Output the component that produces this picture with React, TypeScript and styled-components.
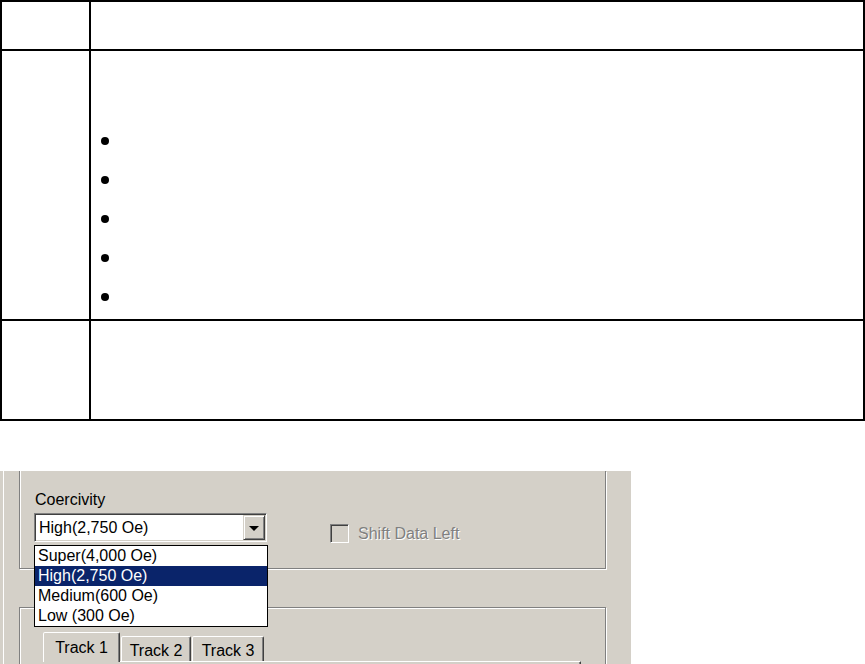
import * as React from 'react';
import styled, { createGlobalStyle } from 'styled-components';

const GlobalStyle = createGlobalStyle`
  html, body {
    margin: 0;
    padding: 0;
    background: #fff;
  }
  body {
    font-family: "Liberation Sans", Arial, sans-serif;
  }
`;

const options = ['Super(4,000 Oe)', 'High(2,750 Oe)', 'Medium(600 Oe)', 'Low (300 Oe)'];
const tabs = [
  { label: 'Track 1', width: 77 },
  { label: 'Track 2', width: 70 },
  { label: 'Track 3', width: 72 },
];

const App = () => {
  return (
    <>
      <GlobalStyle />
      <Table>
        <Cell />
        <Cell />
        <Cell />
        <Cell>
          <BulletList>
            {[0, 1, 2, 3, 4].map((i) => (
              <BulletItem key={i}>
                <Dot />
              </BulletItem>
            ))}
          </BulletList>
        </Cell>
        <Cell />
        <Cell />
      </Table>

      <Dialog>
        <Page>
          <GroupBox $cut>
            <Row>
              <Field>
                <Label>Coercivity</Label>
                <Combo>
                  <ComboText>High(2,750 Oe)</ComboText>
                  <ComboButton>
                    <Arrow />
                  </ComboButton>
                </Combo>
              </Field>
              <CheckRow>
                <CheckBox />
                <DisabledText>Shift Data Left</DisabledText>
              </CheckRow>
            </Row>
          </GroupBox>

          <GroupBox>
            <TabStrip>
              {tabs.map((t, i) => (
                <Tab key={t.label} $active={i === 0} $width={t.width}>
                  {t.label}
                </Tab>
              ))}
            </TabStrip>
            <TabPanel />
          </GroupBox>
        </Page>

        <DropList>
          {options.map((o, i) => (
            <DropItem key={o} $selected={i === 1}>
              {o}
            </DropItem>
          ))}
        </DropList>
      </Dialog>
    </>
  );
};

export default App;

const Table = styled.div`
  display: grid;
  grid-template-columns: 89px 774px;
  grid-template-rows: 49px 270px 100px;
  width: 865px;
  box-sizing: border-box;
  border-top: 2px solid #000;
  border-left: 2px solid #000;
`;

const Cell = styled.div`
  box-sizing: border-box;
  border-right: 2px solid #000;
  border-bottom: 2px solid #000;
`;

const BulletList = styled.ul`
  list-style: none;
  margin: 0;
  padding: 70px 0 0 10px;
`;

const BulletItem = styled.li`
  height: 39px;
  display: flex;
  align-items: center;
`;

const Dot = styled.span`
  width: 8px;
  height: 8px;
  border-radius: 50%;
  background: #000;
`;

const Dialog = styled.div`
  position: relative;
  margin-top: 50px;
  width: 631px;
  height: 193px;
  box-sizing: border-box;
  padding-left: 3px;
  background: #d4d0c8;
  overflow: hidden;
  font-size: 16px;
  color: #000;
`;

const Page = styled.div`
  height: 100%;
  border-left: 1px solid #fff;
  padding-left: 15px;
  display: flex;
  flex-direction: column;
`;

const GroupBox = styled.div<{ $cut?: boolean }>`
  flex: none;
  width: 587px;
  box-sizing: border-box;
  border: 1px solid #808080;
  border-top: ${(p) => (p.$cut ? 'none' : '1px solid #808080')};
  box-shadow: ${(p) => (p.$cut ? 'inset 1px 0 0 #fff' : 'inset 1px 1px 0 #fff')}, 1px 1px 0 #fff;
  height: ${(p) => (p.$cut ? '98px' : '80px')};
  margin-top: ${(p) => (p.$cut ? '0' : '38px')};
  padding: ${(p) => (p.$cut ? '20px 0 0 14px' : '24px 0 0 23px')};
`;

const Row = styled.div`
  display: flex;
  align-items: flex-end;
`;

const Field = styled.div`
  display: flex;
  flex-direction: column;
`;

const Label = styled.span`
  display: block;
  line-height: 18px;
  padding-left: 1px;
`;

const Combo = styled.div`
  margin-top: 4px;
  width: 233px;
  height: 29px;
  box-sizing: border-box;
  display: flex;
  align-items: stretch;
  background: #fff;
  border: 1px solid;
  border-color: #808080 #fff #fff #808080;
  box-shadow: inset 1px 1px 0 #404040, inset -1px -1px 0 #d4d0c8;
  padding: 1px;
`;

const ComboText = styled.div`
  flex: 1;
  display: flex;
  align-items: center;
  padding-left: 3px;
  line-height: 18px;
`;

const ComboButton = styled.div`
  width: 22px;
  box-sizing: border-box;
  background: #d4d0c8;
  border: 1px solid;
  border-color: #d4d0c8 #404040 #404040 #d4d0c8;
  box-shadow: inset 1px 1px 0 #fff, inset -1px -1px 0 #808080;
  display: flex;
  align-items: center;
  justify-content: center;
`;

const Arrow = styled.span`
  width: 0;
  height: 0;
  border-left: 5px solid transparent;
  border-right: 5px solid transparent;
  border-top: 5px solid #000;
  margin-top: 1px;
`;

const CheckRow = styled.div`
  display: flex;
  align-items: center;
  margin-left: 63px;
  margin-bottom: -1px;
`;

const CheckBox = styled.span`
  width: 19px;
  height: 19px;
  box-sizing: border-box;
  background: #d4d0c8;
  border: 1px solid;
  border-color: #808080 #fff #fff #808080;
  box-shadow: inset 1px 1px 0 #404040, inset -1px -1px 0 #d4d0c8;
`;

const DisabledText = styled.span`
  margin-left: 9px;
  line-height: 18px;
  color: #808080;
  text-shadow: 1px 1px 0 #fff;
`;

const TabStrip = styled.div`
  display: flex;
  align-items: flex-end;
  gap: 1px;
  height: 29px;
  position: relative;
  z-index: 1;
`;

const Tab = styled.div<{ $active?: boolean; $width: number }>`
  width: ${(p) => p.$width}px;
  height: ${(p) => (p.$active ? '30px' : '25px')};
  margin-bottom: ${(p) => (p.$active ? '-1px' : '0')};
  box-sizing: border-box;
  padding-top: ${(p) => (p.$active ? '6px' : '5px')};
  text-align: center;
  line-height: 18px;
  background: #d4d0c8;
  border: 1px solid;
  border-bottom: none;
  border-color: #fff #404040 transparent #fff;
  border-radius: 2px 2px 0 0;
  box-shadow: inset -1px 0 0 #808080;
`;

const TabPanel = styled.div`
  width: 538px;
  height: 20px;
  box-sizing: border-box;
  border-top: 1px solid #fff;
  border-right: 1px solid #404040;
  box-shadow: inset -1px 0 0 #808080;
`;

const DropList = styled.div`
  position: absolute;
  left: 34px;
  top: 74px;
  width: 234px;
  box-sizing: border-box;
  border: 1px solid #000;
  background: #fff;
`;

const DropItem = styled.div<{ $selected?: boolean }>`
  height: 20px;
  line-height: 20px;
  padding-left: 3px;
  white-space: nowrap;
  background: ${(p) => (p.$selected ? '#0a246a' : '#fff')};
  color: ${(p) => (p.$selected ? '#fff' : '#000')};
`;
